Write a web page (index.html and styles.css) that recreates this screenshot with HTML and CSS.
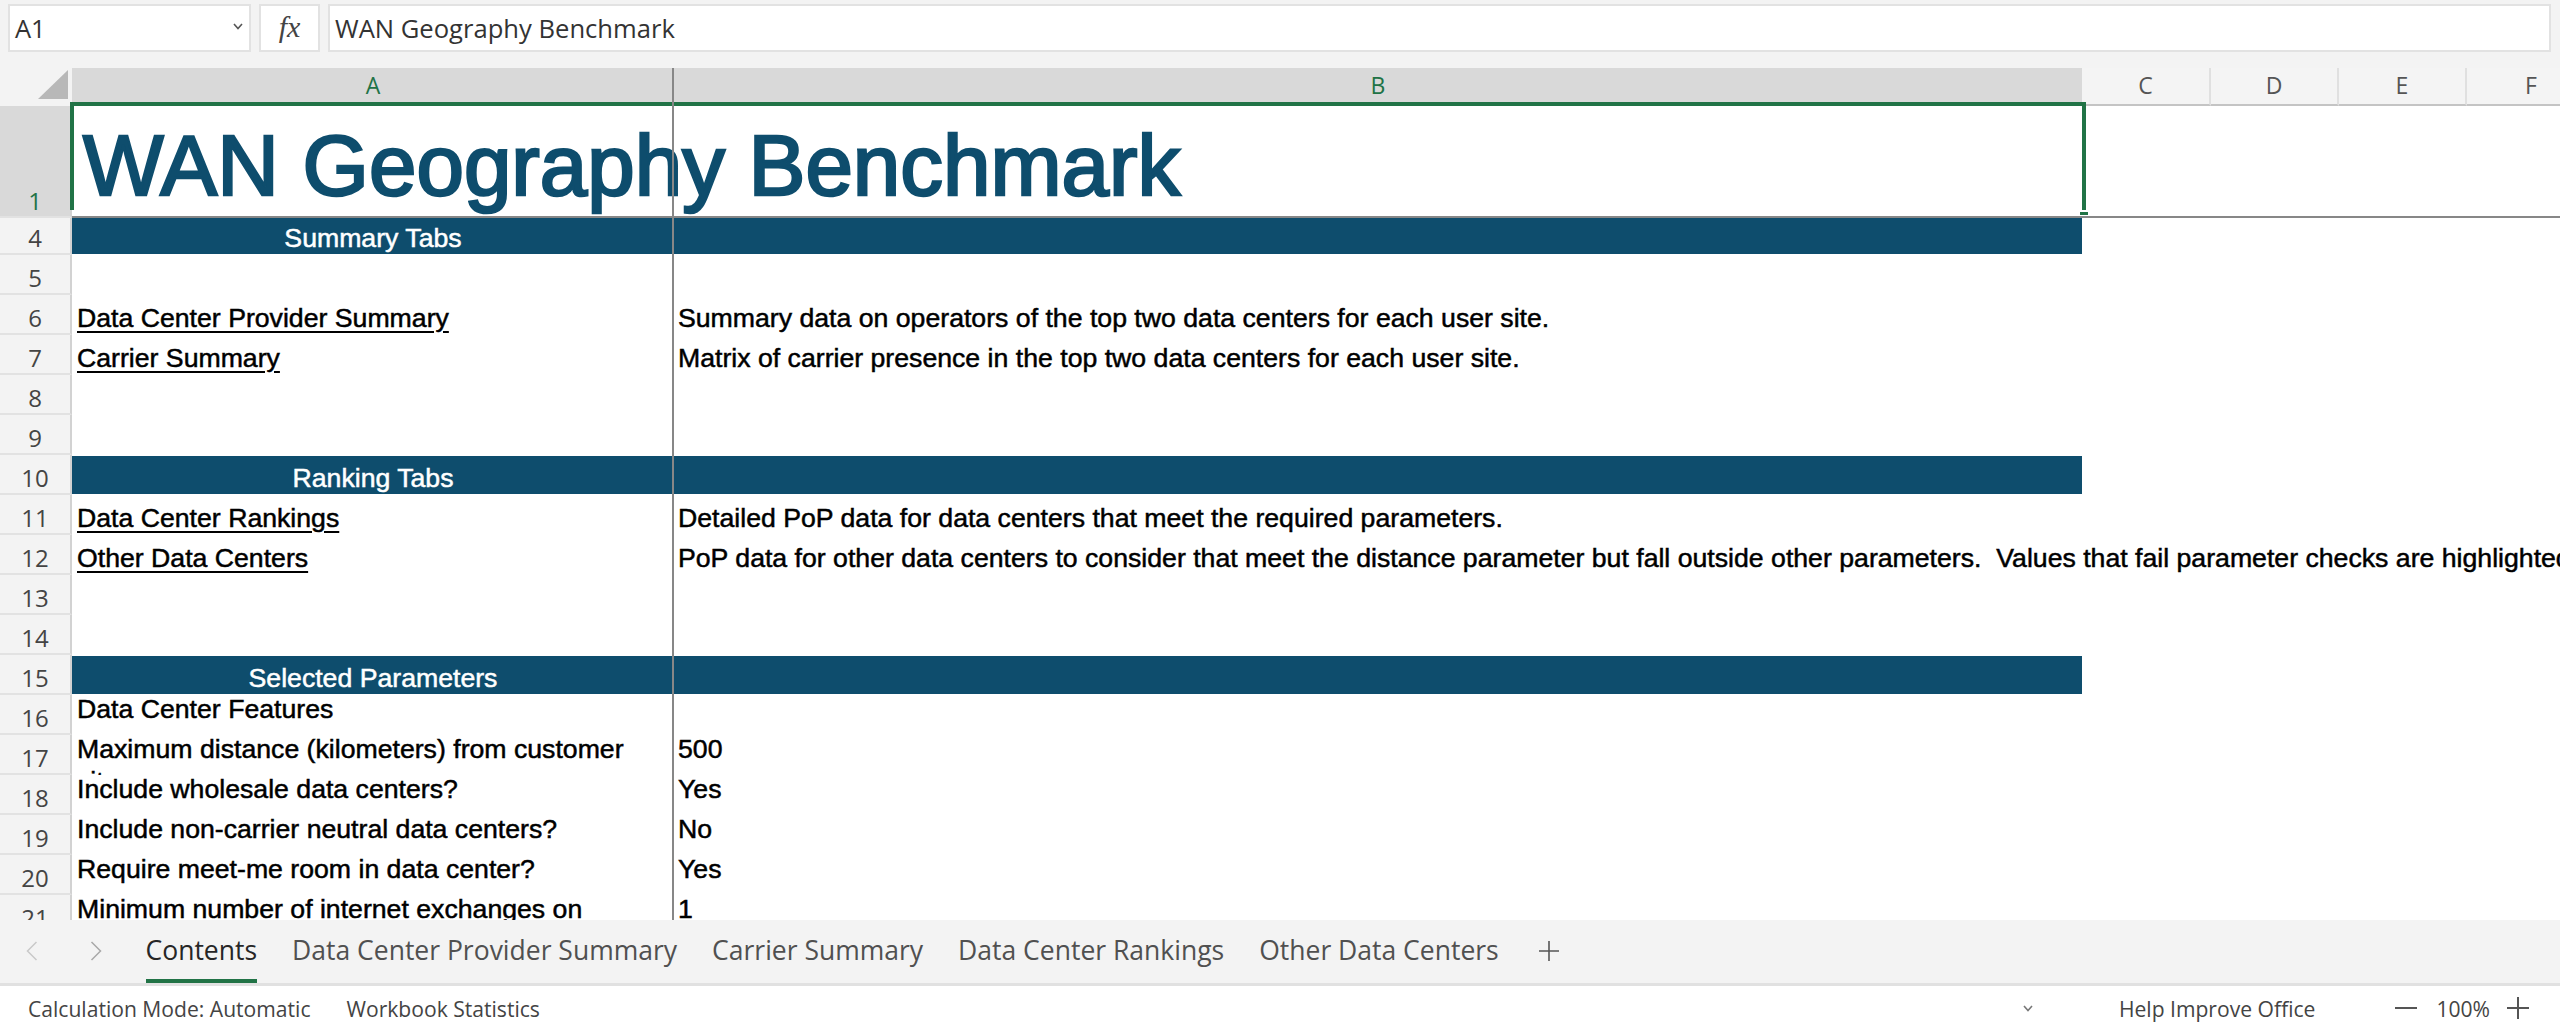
FILE: index.html
```html
<!DOCTYPE html>
<html>
<head>
<meta charset="utf-8">
<title>WAN Geography Benchmark</title>
<link rel="stylesheet" href="styles.css">
</head>
<body>
<div class="app">
  <div class="fbar">
    <div class="namebox"><span>A1</span><svg class="nb-chev" width="10" height="7" viewBox="0 0 10 7"><polyline points="1,1 5,5.5 9,1" fill="none" stroke="#555" stroke-width="1.6"/></svg></div>
    <div class="fxbox"><span class="fx">fx</span></div>
    <div class="finput">WAN Geography Benchmark</div>
  </div>

  <div class="sheet">
    <div class="hrow">
      <div class="corner"><span class="tri"></span></div>
      <div class="ch sel">A</div>
      <div class="ch sel">B</div>
      <div class="ch sep">C</div>
      <div class="ch sep">D</div>
      <div class="ch sep">E</div>
      <div class="ch">F</div>
    </div>

    <div class="row r1">
      <div class="rh sel">1</div>
      <div class="c a title">WAN Geography Benchmark</div>
      <div class="c b"></div>
      <div class="c rest"></div>
    </div>

    <div class="row r4">
      <div class="rh">4</div>
      <div class="c a band">Summary Tabs</div>
      <div class="c b band"></div>
      <div class="c rest"></div>
    </div>
    <div class="row">
      <div class="rh">5</div>
      <div class="c a"></div>
      <div class="c b"></div>
      <div class="c rest"></div>
    </div>
    <div class="row">
      <div class="rh">6</div>
      <div class="c a"><span class="link">Data Center Provider Summary</span></div>
      <div class="c b">Summary data on operators of the top two data centers for each user site.</div>
      <div class="c rest"></div>
    </div>
    <div class="row">
      <div class="rh">7</div>
      <div class="c a"><span class="link">Carrier Summary</span></div>
      <div class="c b">Matrix of carrier presence in the top two data centers for each user site.</div>
      <div class="c rest"></div>
    </div>
    <div class="row">
      <div class="rh">8</div>
      <div class="c a"></div>
      <div class="c b"></div>
      <div class="c rest"></div>
    </div>
    <div class="row">
      <div class="rh">9</div>
      <div class="c a"></div>
      <div class="c b"></div>
      <div class="c rest"></div>
    </div>
    <div class="row">
      <div class="rh">10</div>
      <div class="c a band">Ranking Tabs</div>
      <div class="c b band"></div>
      <div class="c rest"></div>
    </div>
    <div class="row">
      <div class="rh">11</div>
      <div class="c a"><span class="link">Data Center Rankings</span></div>
      <div class="c b">Detailed PoP data for data centers that meet the required parameters.</div>
      <div class="c rest"></div>
    </div>
    <div class="row">
      <div class="rh">12</div>
      <div class="c a"><span class="link">Other Data Centers</span></div>
      <div class="c b pre">PoP data for other data centers to consider that meet the distance parameter but fall outside other parameters.  Values that fail parameter checks are highlighted in red.</div>
      <div class="c rest"></div>
    </div>
    <div class="row">
      <div class="rh">13</div>
      <div class="c a"></div>
      <div class="c b"></div>
      <div class="c rest"></div>
    </div>
    <div class="row">
      <div class="rh">14</div>
      <div class="c a"></div>
      <div class="c b"></div>
      <div class="c rest"></div>
    </div>
    <div class="row">
      <div class="rh">15</div>
      <div class="c a band">Selected Parameters</div>
      <div class="c b band"></div>
      <div class="c rest"></div>
    </div>
    <div class="row">
      <div class="rh">16</div>
      <div class="c a top">Data Center Features</div>
      <div class="c b top"></div>
      <div class="c rest"></div>
    </div>
    <div class="row">
      <div class="rh">17</div>
      <div class="c a top wrap"><span>Maximum distance (kilometers) from customer</span><span class="l2">site</span></div>
      <div class="c b top">500</div>
      <div class="c rest"></div>
    </div>
    <div class="row">
      <div class="rh">18</div>
      <div class="c a top">Include wholesale data centers?</div>
      <div class="c b top">Yes</div>
      <div class="c rest"></div>
    </div>
    <div class="row">
      <div class="rh">19</div>
      <div class="c a top">Include non-carrier neutral data centers?</div>
      <div class="c b top">No</div>
      <div class="c rest"></div>
    </div>
    <div class="row">
      <div class="rh">20</div>
      <div class="c a top">Require meet-me room in data center?</div>
      <div class="c b top">Yes</div>
      <div class="c rest"></div>
    </div>
    <div class="row">
      <div class="rh">21</div>
      <div class="c a top wrap"><span>Minimum number of internet exchanges on</span><span class="l2">site</span></div>
      <div class="c b top">1</div>
      <div class="c rest"></div>
    </div>

    <div class="selbox"></div>
    <div class="handle"></div>
    <div class="freeze-v"></div>
  </div>

  <div class="tabs">
    <div class="nav"><svg width="12" height="20" viewBox="0 0 12 20"><polyline points="10.5,1 1.5,10 10.5,19" fill="none" stroke="#c9c9c9" stroke-width="1.5"/></svg></div>
    <div class="nav"><svg width="12" height="20" viewBox="0 0 12 20"><polyline points="1.5,1 10.5,10 1.5,19" fill="none" stroke="#a9a9a9" stroke-width="1.5"/></svg></div>
    <div class="tab active">Contents</div>
    <div class="tab">Data Center Provider Summary</div>
    <div class="tab">Carrier Summary</div>
    <div class="tab">Data Center Rankings</div>
    <div class="tab">Other Data Centers</div>
    <div class="addtab"><svg width="22" height="22" viewBox="0 0 22 22"><path d="M11 1V21M1 11H21" fill="none" stroke="#555" stroke-width="1.6"/></svg></div>
  </div>

  <div class="status">
    <span class="st">Calculation Mode: Automatic</span>
    <span class="st st2">Workbook Statistics</span>
    <div class="st-right">
      <svg class="st-chev" width="10" height="7" viewBox="0 0 10 7"><polyline points="1,1 5,5.5 9,1" fill="none" stroke="#777" stroke-width="1.6"/></svg>
      <span class="st help">Help Improve Office</span>
      <svg class="zminus" width="22" height="4" viewBox="0 0 22 4"><path d="M0 2H22" stroke="#555" stroke-width="2"/></svg>
      <span class="st zoom">100%</span>
      <svg class="zplus" width="24" height="24" viewBox="0 0 24 24"><path d="M12 1V23M1 12H23" fill="none" stroke="#555" stroke-width="2"/></svg>
    </div>
  </div>
</div>
</body>
</html>
```

FILE: styles.css
```css
html, body {
  margin: 0;
  padding: 0;
}
body {
  width: 2560px;
  height: 1030px;
  overflow: hidden;
  background: #ffffff;
  font-family: "Open Sans", "Noto Sans", sans-serif;
}
.app {
  display: flex;
  flex-direction: column;
  height: 1030px;
}

/* formula bar */
.fbar {
  height: 68px;
  flex: none;
  box-sizing: border-box;
  background: #f3f3f3;
  display: flex;
  padding: 4px 9px 16px 8px;
  gap: 8px;
}
.namebox {
  width: 243px;
  box-sizing: border-box;
  background: #fff;
  border: 2px solid #e2e2e2;
  display: flex;
  align-items: center;
  justify-content: space-between;
  padding: 0 6px 0 5px;
  font-size: 25.5px;
  color: #333;
}
.nb-chev {
  margin-top: -4px;
}
.fxbox {
  width: 61px;
  box-sizing: border-box;
  background: #fff;
  border: 2px solid #e2e2e2;
  display: flex;
  align-items: center;
  justify-content: center;
}
.fx {
  font-family: "Liberation Serif", "DejaVu Serif", serif;
  font-style: italic;
  font-size: 30px;
  color: #444;
  margin-top: -2px;
}
.finput {
  flex: 1;
  box-sizing: border-box;
  background: #fff;
  border: 2px solid #e2e2e2;
  display: flex;
  align-items: center;
  padding-left: 5px;
  font-size: 25.6px;
  color: #333;
}

/* sheet */
.sheet {
  flex: 1;
  position: relative;
  overflow: hidden;
  background: #fff;
}
.hrow {
  display: grid;
  grid-template-columns: 72px 602px 1408px 129px 128px 128px 128px;
  height: 38px;
}
.corner {
  background: #f3f3f3;
  display: flex;
  justify-content: flex-end;
  align-items: flex-start;
  padding: 2px 4px 0 0;
  box-sizing: border-box;
}
.tri {
  width: 30px;
  height: 29px;
  background: #b8b8b8;
  clip-path: polygon(100% 0, 100% 100%, 0 100%);
}
.ch {
  box-sizing: border-box;
  background: #f4f4f4;
  border-bottom: 2px solid #c4c4c4;
  color: #555;
  font-size: 23px;
  line-height: 34px;
  text-align: center;
}
.ch.sep {
  border-right: 2px solid #e0e0e0;
}
.ch.sel {
  background: #d9d9d9;
  color: #217346;
  border-bottom: 4px solid #217346;
}

.row {
  display: grid;
  grid-template-columns: 72px 602px 1408px 1fr;
  height: 40px;
}
.row.r1 {
  height: 112px;
}
.row.r4 {
  height: 37px;
}
.rh {
  box-sizing: border-box;
  background: #f3f3f3;
  border-bottom: 2px solid #e2e2e2;
  border-right: 2px solid #d2d2d2;
  display: flex;
  align-items: flex-end;
  justify-content: center;
  font-size: 24px;
  line-height: 30px;
  color: #444;
}
.rh.sel {
  background: #d9d9d9;
  color: #217346;
}
.c {
  box-sizing: border-box;
  display: flex;
  align-items: flex-end;
  min-width: 0;
  font-family: "Liberation Sans", Arial, sans-serif;
  font-size: 26.67px;
  line-height: 30px;
  padding-bottom: 2px;
  white-space: nowrap;
  color: #000;
  -webkit-text-stroke: 0.5px currentColor;
}
.c.a {
  padding-left: 5px;
}
.c.b {
  padding-left: 4px;
}
.c.pre {
  white-space: pre;
}
.r1 .c {
  border-bottom: 2px solid #878787;
  padding-bottom: 1.5px;
}
.c.title {
  font-size: 85.33px;
  line-height: 98px;
  color: #0e4d6d;
  padding-left: 11px;
  -webkit-text-stroke: 2.6px currentColor;
}
.link {
  text-decoration: underline;
  text-decoration-thickness: 2px;
  text-underline-offset: 4px;
}
.c.band {
  background: #0e4d6d;
  color: #fff;
  border-top: 1px solid #fff;
  border-bottom: 1px solid #fff;
  padding-bottom: 1px;
}
.c.a.band {
  justify-content: center;
  padding-left: 0;
}
.r4 .c.band {
  border-top: 0;
}
.c.top {
  align-items: flex-start;
  line-height: 28px;
  padding-bottom: 0;
}
.c.wrap {
  overflow: hidden;
  flex-direction: column;
}
.l2 {
  margin-top: 4px;
}

/* overlays */
.selbox {
  position: absolute;
  left: 70px;
  top: 34px;
  width: 2016px;
  height: 108px;
  box-sizing: border-box;
  border: 4px solid #217346;
  border-bottom: 0;
  pointer-events: none;
}
.handle {
  position: absolute;
  left: 2080px;
  top: 144px;
  width: 8px;
  height: 3px;
  background: #217346;
}
.freeze-v {
  position: absolute;
  left: 672px;
  top: 0;
  width: 2px;
  height: 100%;
  background: #878787;
}

/* sheet tabs */
.tabs {
  height: 66px;
  flex: none;
  box-sizing: border-box;
  background: #f3f3f3;
  border-bottom: 3px solid #e1e1e1;
  display: flex;
  align-items: stretch;
}
.nav {
  width: 64px;
  display: flex;
  align-items: center;
  justify-content: center;
  padding-bottom: 2px;
}
.tab {
  position: relative;
  display: flex;
  align-items: center;
  padding: 0 17.5px 3px;
  font-size: 26.5px;
  color: #505050;
  white-space: nowrap;
}
.tab.active {
  color: #262626;
}
.tab.active::after {
  content: "";
  position: absolute;
  left: 17.5px;
  right: 17.5px;
  bottom: 0;
  height: 4px;
  background: #217346;
}
.addtab {
  display: flex;
  align-items: center;
  padding: 0 0 2px 22px;
}

/* status bar */
.status {
  height: 44px;
  flex: none;
  display: flex;
  align-items: center;
  padding-left: 28px;
  background: #fff;
  font-size: 21.1px;
  color: #444;
}
.st2 {
  margin-left: 36px;
}
.st-right {
  margin-left: auto;
  display: flex;
  align-items: center;
  padding-right: 30px;
}
.st-chev {
  margin-right: 86px;
}
.zminus {
  margin-left: 80px;
}
.zoom {
  margin-left: 19px;
}
.zplus {
  margin-left: 16px;
}
```
